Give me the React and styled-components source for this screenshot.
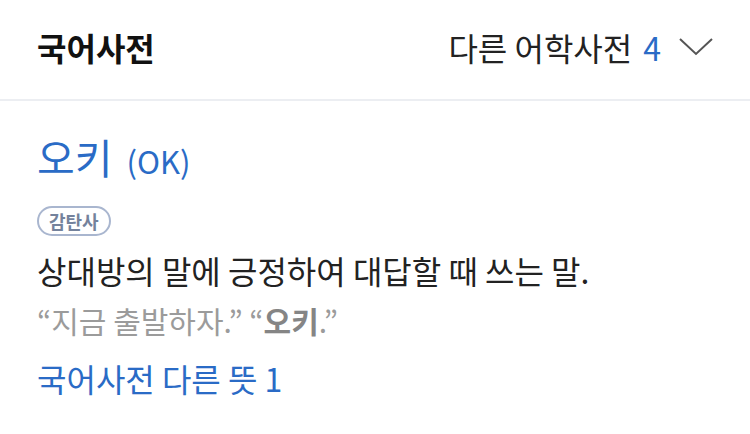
import React from "react";
import styled, { createGlobalStyle } from "styled-components";

const GlobalStyle = createGlobalStyle`
  html, body {
    margin: 0;
    padding: 0;
    background: #fff;
  }
  body {
    font-family: "Noto Sans CJK KR", "Noto Sans", sans-serif;
    color: #222;
  }
`;

const Page = styled.div`
  width: 750px;
  height: 434px;
  background: #fff;
  overflow: hidden;
`;

const Header = styled.header`
  height: 101px;
  box-sizing: border-box;
  padding: 0 37px 6px;
  display: flex;
  align-items: center;
  justify-content: space-between;
  border-bottom: 2px solid #eceef2;
`;

const Title = styled.h1`
  margin: 0;
  font-size: 32px;
  font-weight: 700;
  color: #111;
`;

const OtherDict = styled.button`
  display: flex;
  align-items: center;
  gap: 18px;
  border: 0;
  background: none;
  padding: 0;
  font-family: inherit;
  font-size: 32px;
  color: #222;
`;

const Count = styled.span`
  color: #2a6bc6;
  margin-left: 11px;
`;

const Body = styled.section`
  padding: 30px 37px 0;
  display: flex;
  flex-direction: column;
  align-items: flex-start;
`;

const Entry = styled.div`
  display: flex;
  align-items: baseline;
  gap: 14px;
  color: #2a6bc6;
  height: 50px;
`;

const Word = styled.span`
  font-size: 41px;
  line-height: 50px;
`;

const Origin = styled.span`
  font-size: 31px;
`;

const Badge = styled.span`
  margin-top: 25px;
  display: inline-flex;
  align-items: center;
  height: 30px;
  padding: 0 10px;
  box-sizing: border-box;
  border: 2px solid #a9b6cf;
  border-radius: 15px;
  font-size: 18px;
  font-weight: 700;
  color: #74829c;
`;

const Meaning = styled.p`
  margin: 12px 0 0;
  font-size: 32px;
  line-height: 44px;
  color: #222;
`;

const Example = styled.p`
  margin: 6px 0 0;
  font-size: 30px;
  line-height: 44px;
  color: #9b9b9b;

  b {
    color: #858585;
    font-weight: 700;
  }
`;

const MoreLink = styled.a`
  margin-top: 14px;
  font-size: 32px;
  line-height: 44px;
  color: #2a6bc6;
  text-decoration: none;
`;

const Chevron = () => (
  <svg width="34" height="18" viewBox="0 0 34 18" fill="none">
    <path d="M1 1 L17 16 L33 1" stroke="#555" strokeWidth="2" />
  </svg>
);

export default function App() {
  return (
    <Page>
      <GlobalStyle />
      <Header>
        <Title>국어사전</Title>
        <OtherDict>
          <span>
            다른 어학사전<Count>4</Count>
          </span>
          <Chevron />
        </OtherDict>
      </Header>
      <Body>
        <Entry>
          <Word>오키</Word>
          <Origin>(OK)</Origin>
        </Entry>
        <Badge>감탄사</Badge>
        <Meaning>상대방의 말에 긍정하여 대답할 때 쓰는 말.</Meaning>
        <Example>
          “지금 출발하자.” “<b>오키</b>.”
        </Example>
        <MoreLink href="#">국어사전 다른 뜻 1</MoreLink>
      </Body>
    </Page>
  );
}
